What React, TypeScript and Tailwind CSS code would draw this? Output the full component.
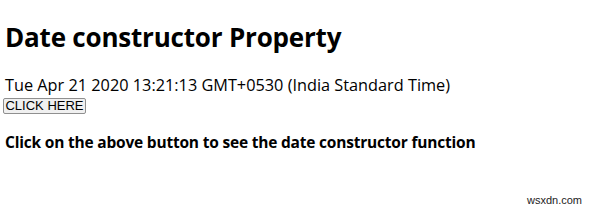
export default function App() {
  return (
    <div className="relative w-[600px] h-[210px] bg-white text-black font-['Open_Sans',sans-serif]">
      <div className="pl-[5px] pt-[20px]">
        <h1 className="text-[26px] leading-[34px] font-bold tracking-[-0.2px]">Date constructor Property</h1>
        <p className="mt-[21px] text-[16.3px] leading-[20px] font-medium">Tue Apr 21 2020 13:21:13 GMT+0530 (India Standard Time)</p>
        <button className="-ml-[2px] mt-[3px] h-[16px] w-[83px] rounded-[2px] border border-[#8f8f8f] bg-[#f0f0f0] font-['Liberation_Sans',sans-serif] text-[13px] leading-[14px] flex items-center justify-center">
          CLICK HERE
        </button>
        <p className="mt-[18px] text-[15.5px] leading-[20px] font-bold tracking-[-0.2px]">Click on the above button to see the date constructor function</p>
      </div>
      <span className="absolute left-[527px] top-[194px] text-[11px] leading-[12px] font-['Liberation_Sans',sans-serif] text-[#222]">wsxdn.com</span>
    </div>
  );
}
